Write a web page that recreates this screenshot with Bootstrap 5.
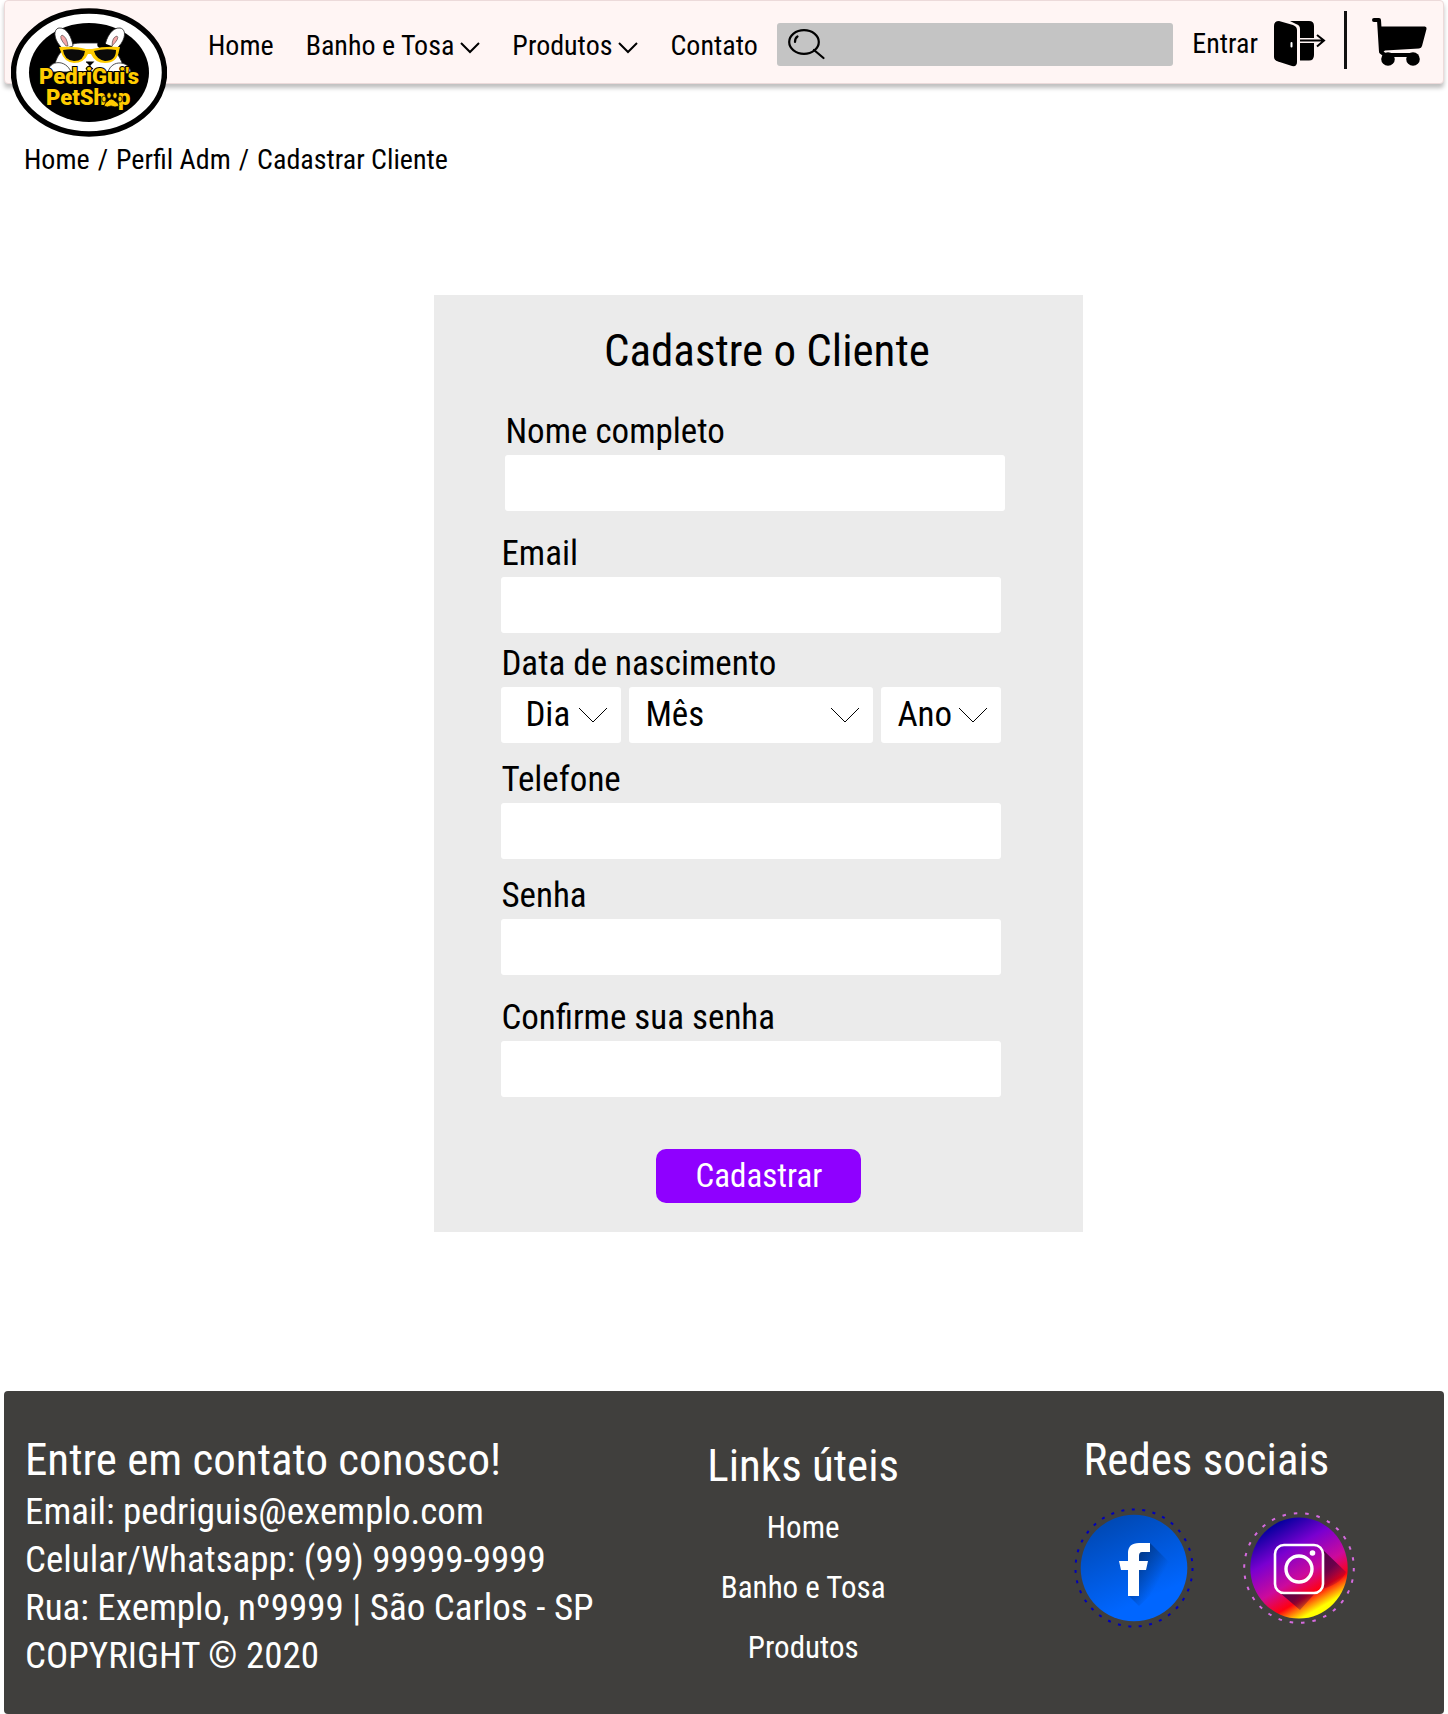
<!DOCTYPE html>
<html lang="pt-BR">
<head>
<meta charset="utf-8">
<meta name="viewport" content="width=device-width, initial-scale=1">
<title>PedriGui's PetShop - Cadastrar Cliente</title>
<link href="https://cdn.jsdelivr.net/npm/bootstrap@5.3.0/dist/css/bootstrap.min.css" rel="stylesheet">
<style>
  body { font-family: "Roboto Condensed", "Liberation Sans Narrow", "Open Sans Condensed", "DejaVu Sans Condensed", sans-serif; color: #000; background: #fff; }
  a { color: inherit; text-decoration: none; }
  svg { display: block; flex-shrink: 0; }
  .site-bar { min-height: 84px; background: #fff5f4; border: 1px solid #ecdada; border-radius: 4px; box-shadow: 0 4px 4px rgba(0,0,0,.25); font-size: 28px; line-height: 36px; }
  .logo-link { margin: 7px 41px -54px 6px; align-self: flex-start; }
  .menu { gap: 32px; padding-top: 8px; }
  .menu a { display: flex; align-items: center; gap: 6px; white-space: nowrap; }
  .menu svg { margin-top: 4px; }
  .search-box { background: #c4c4c4; height: 43px; border-radius: 3px; margin: 4px 0 0 19px; padding-left: 11px; }
  .search-box input { background: transparent; border: 0; outline: 0; min-width: 0; font-size: 24px; }
  .account { gap: 16px; margin-left: 19px; padding-top: 4px; }
  .rule { width: 3px; height: 58px; background: #111; margin: 0 25px 4px 18px; }
  .cart { margin-right: 16px; }
  .trail { padding: 56px 24px 0; font-size: 28px; line-height: 40px; }
  .trail .breadcrumb { --bs-breadcrumb-divider-color: #000; --bs-breadcrumb-item-active-color: #000; }
  .signup { width: 649px; max-width: 100%; margin: 115px 0 159px 30%; background: #ebebeb; padding: 27px 0 29px; }
  .signup h1 { font-size: 45px; line-height: 58px; margin-bottom: 29px; font-weight: 400; }
  .fields { padding-left: 67px; }
  .entry { width: 500px; max-width: 100%; margin-bottom: 20px; }
  .entry.near { margin-bottom: 14px; }
  .entry.tight { margin-bottom: 8px; }
  .entry label, .entry legend { display: block; float: none; font-size: 35px; line-height: 46px; margin: 0; }
  .entry .form-control, .entry .form-select { height: 56px; border: 0; border-radius: 3px; background-color: #fff; font-size: 35px; line-height: 46px; padding: 0 16px; color: #000; }
  .entry .form-select { background-image: url("data:image/svg+xml,%3Csvg xmlns='http://www.w3.org/2000/svg' viewBox='0 0 30 16'%3E%3Cpath d='M1 1 15 15 29 1' fill='none' stroke='%23000'/%3E%3C/svg%3E"); background-size: 30px 16px; background-position: right 13px center; }
  .entry .short { width: 120px; flex: none; }
  .send { width: 205px; height: 54px; margin-top: 52px; background: #8f00ff; color: #fff; border: 0; border-radius: 10px; font-size: 33px; line-height: 46px; padding: 0; }
  .send:hover { background: #7c00dd; color: #fff; }
  .site-foot { background: #403f3d; color: #fff; border-radius: 4px; padding: 41px 0 34px; display: grid; grid-template-columns: 44% 23% 33%; font-size: 37px; line-height: 48px; }
  .site-foot h2 { font-size: 45px; line-height: 56px; margin: 0; font-weight: 400; white-space: nowrap; }
  .contact { padding-left: 21px; white-space: nowrap; }
  .useful { font-size: 31px; line-height: 60px; padding-top: 6px; }
  .useful h2 { margin-bottom: 4px; }
  .social { gap: 49px; margin-top: 20px; }
  @media (max-width: 991px) {
    .site-bar { flex-wrap: wrap; }
    .signup { margin-left: auto; margin-right: auto; }
    .fields { padding: 0 20px; }
    .site-foot { grid-template-columns: 1fr; }
    .contact { white-space: normal; }
  }
</style>
<script src="https://cdn.jsdelivr.net/npm/bootstrap@5.3.0/dist/js/bootstrap.bundle.min.js"></script>
</head>
<body>
<header class="site-bar d-flex align-items-center mx-1">
  <a class="logo-link" href="#" aria-label="PedriGui's PetShop">
    <svg width="156" height="129" viewBox="11 8 156 129">
      <ellipse cx="89" cy="72.500" rx="75.500" ry="61.500" fill="#fff" stroke="#000" stroke-width="5.500"/>
      <ellipse cx="89" cy="72.500" rx="60" ry="49.500"/>
      <g fill="#fff" stroke="#222" stroke-width=".8">
        <path d="M54 72C54 55 66 43 80 43H99C112 45 123 57 124 72Z"/>
        <path d="M63 49C53 40 53 29 59 28C67 27 72 38 73 46Z"/>
        <path d="M116 49C126 41 127 29 120 28C112 27 106 38 105 46Z"/>
        <path d="M48 72C49 60 66 59 71 72ZM108 72C112 59 129 61 131 72Z"/>
      </g>
      <path d="M98 42Q95 47 102 49L117 52Q113 44 98 42Z"/>
      <path d="M66 46Q58 37 62 35Q67 37 68 46ZM112 46Q112 37 117 36Q120 38 112 46Z" fill="#f4a6a6" stroke="#222" stroke-width=".5"/>
      <path d="M59 47Q75 46 86 49H92Q104 46 120 47L119 51Q117 63 105 63Q95 63 91 54H88Q84 63 74 63Q64 62 61 52Z" fill="#fc0"/>
      <path d="M63 50Q74 48 85 51Q84 61 74 61Q64 60 63 50ZM94 51Q105 48 116 50Q116 61 105 61Q96 59 94 51Z" fill="#0a0a0a"/>
      <path d="M86 62H93L90 65V67L93 69M89 66L86 69" stroke="#000" stroke-width="1.200"/>
      <g fill="#fc0" stroke="#000" stroke-width="2" paint-order="stroke" font-family="Roboto, 'Liberation Sans', sans-serif" font-weight="900" font-size="22">
        <text x="39" y="84">PedriGui's</text>
        <text x="46" y="105">PetSh</text>
        <text x="118" y="105">p</text>
      </g>
      <g fill="#fc0" stroke="#000" stroke-width=".8">
        <path d="M104 106Q105 102 108 101Q111 97 115 101Q119 103 119 106Q115 108 111 106Q107 108 104 106Z"/>
        <ellipse cx="104" cy="99" rx="2.200" ry="3"/><ellipse cx="109" cy="95.500" rx="2.200" ry="3"/>
        <ellipse cx="115" cy="95.500" rx="2.200" ry="3"/><ellipse cx="120" cy="99" rx="2.200" ry="3"/>
      </g>
    </svg>
  </a>
  <nav class="menu d-flex align-items-center flex-shrink-0">
    <a href="#">Home</a>
    <a href="#">Banho e Tosa
      <svg width="20" height="12" viewBox="0 0 20 12" fill="none" stroke="#000" stroke-width="2"><path d="M1 1 10 10 19 1"/></svg></a>
    <a href="#">Produtos
      <svg width="20" height="12" viewBox="0 0 20 12" fill="none" stroke="#000" stroke-width="2"><path d="M1 1 10 10 19 1"/></svg></a>
    <a href="#">Contato</a>
  </nav>
  <form class="search-box d-flex align-items-center flex-grow-1" role="search">
    <label for="busca" class="d-block" aria-label="Buscar">
      <svg width="38" height="31" viewBox="0 0 38 31" fill="none" stroke="#000" stroke-width="2.200" stroke-linecap="round"><ellipse cx="16" cy="13" rx="14.800" ry="11.800"/><path d="M26 21 35.500 29"/><path d="M7 13Q7 9 9.500 7.500"/></svg>
    </label>
    <input id="busca" type="search" class="flex-grow-1" aria-label="Buscar">
  </form>
  <a class="account d-flex align-items-center" href="#">Entrar
    <svg width="52" height="46" viewBox="0 0 52 46">
      <path d="M16 0H35Q40 0 40 5V17H26V8Q26 4 22 3ZM26 22H40V34Q40 39.500 35 39.500H26Z"/>
      <path d="M26 19.500H50M43 14 50 19.500 43 25.500" fill="none" stroke="#fff5f4" stroke-width="5"/>
      <path d="M26 19.500H50M43 14 50 19.500 43 25.500" fill="none" stroke="#000" stroke-width="2"/>
      <path d="M5 0 19 4Q23 5.500 23 9V41Q23 46 18 45L4 40.500Q0 39 0 36V5Q0 0 5 0Z"/>
      <rect x="16.500" y="21" width="2" height="5.500" rx="1" fill="#fff"/>
    </svg></a>
  <span class="rule"></span>
  <a class="cart" href="#" aria-label="Carrinho">
    <svg width="55" height="48" viewBox="0 0 55 48">
      <path d="M2 2H7L9 34L13 37H40" fill="none" stroke="#000" stroke-width="4" stroke-linecap="round" stroke-linejoin="round"/>
      <path d="M8 8.500H53Q55 9 54.500 11L50 28Q49.500 30 47 30.500L13 32.500L10 35Z"/>
      <circle cx="16" cy="41" r="6.800"/><circle cx="41" cy="41" r="6.800"/>
    </svg></a>
</header>

<nav class="trail" aria-label="breadcrumb">
  <ol class="breadcrumb mb-0">
    <li class="breadcrumb-item"><a href="#">Home</a></li>
    <li class="breadcrumb-item"><a href="#">Perfil Adm</a></li>
    <li class="breadcrumb-item active" aria-current="page">Cadastrar Cliente</li>
  </ol>
</nav>

<main>
  <form class="signup">
    <h1 class="text-center ps-3">Cadastre o Cliente</h1>
    <div class="fields">
      <div class="entry ms-1"><label for="nome">Nome completo</label><input class="form-control" id="nome" type="text"></div>
      <div class="entry tight"><label for="email">Email</label><input class="form-control" id="email" type="email"></div>
      <fieldset class="entry near">
        <legend>Data de nascimento</legend>
        <div class="d-flex gap-2">
          <select class="form-select short ps-4" aria-label="Dia"><option>Dia</option></select>
          <select class="form-select" aria-label="Mês"><option>Mês</option></select>
          <select class="form-select short" aria-label="Ano"><option>Ano</option></select>
        </div>
      </fieldset>
      <div class="entry near"><label for="tel">Telefone</label><input class="form-control" id="tel" type="tel"></div>
      <div class="entry"><label for="senha">Senha</label><input class="form-control" id="senha" type="password"></div>
      <div class="entry"><label for="senha2">Confirme sua senha</label><input class="form-control" id="senha2" type="password"></div>
    </div>
    <button class="btn send d-block mx-auto" type="submit">Cadastrar</button>
  </form>
</main>

<footer class="site-foot mx-1">
  <section class="contact">
    <h2>Entre em contato conosco!</h2>
    <div>Email: pedriguis@exemplo.com</div>
    <div>Celular/Whatsapp: (99) 99999-9999</div>
    <div>Rua: Exemplo, nº9999 | São Carlos - SP</div>
    <div>COPYRIGHT © 2020</div>
  </section>
  <section class="useful d-flex flex-column align-items-center">
    <h2>Links úteis</h2>
    <a href="#">Home</a>
    <a href="#">Banho e Tosa</a>
    <a href="#">Produtos</a>
  </section>
  <section>
    <h2 class="text-center">Redes sociais</h2>
    <div class="social d-flex justify-content-center align-items-center ps-3">
      <a href="#" aria-label="Facebook">
        <svg width="120" height="120" viewBox="0 0 120 120">
          <defs>
            <linearGradient id="fb" x1=".25" y1="0" x2=".6" y2=".8"><stop offset="0" stop-color="#0047b0"/><stop offset="1" stop-color="#06f"/></linearGradient>
            <linearGradient id="fs" x1="0" y1="0" x2=".7" y2=".5"><stop offset="0" stop-color="#002a66"/><stop offset="1" stop-color="#002a66" stop-opacity="0"/></linearGradient>
          </defs>
          <circle cx="60" cy="60" r="58.500" fill="none" stroke="#0000b8" stroke-width="2" stroke-dasharray="3 7.500"/>
          <circle cx="60" cy="60" r="53.300" fill="url(#fb)"/>
          <path d="M76 35 103 62 65 98 54 87V44Z" fill="url(#fs)"/>
          <path d="M76 35V44H68Q65 44 65 48V53H74L72 62H65V88H54V62H47L45 53H54V45Q54 35 65 35Z" fill="#fff"/>
        </svg></a>
      <a href="#" aria-label="Instagram">
        <svg width="112" height="112" viewBox="0 0 112 112">
          <defs>
            <linearGradient id="ig" gradientUnits="userSpaceOnUse" x1="30" y1="12" x2="78" y2="95"><stop offset="0" stop-color="#00009c"/><stop offset=".32" stop-color="#7a00d0"/><stop offset=".62" stop-color="#cc0a9c"/><stop offset=".83" stop-color="#ff0010"/><stop offset="1" stop-color="#ffff00"/></linearGradient>
            <linearGradient id="is" gradientUnits="userSpaceOnUse" x1="56" y1="57" x2="82" y2="87"><stop offset="0" stop-color="#500040"/><stop offset=".5" stop-color="#500040" stop-opacity=".8"/><stop offset="1" stop-color="#500040" stop-opacity="0"/></linearGradient>
          </defs>
          <circle cx="56" cy="56" r="54.800" fill="none" stroke="#d66be0" stroke-width="2" stroke-dasharray="3.500 7.980"/>
          <ellipse cx="56" cy="56" rx="48.700" ry="50.500" fill="url(#ig)"/>
          <path d="M79 37 103 60Q98 73 75 78L57 98 36 80Z" fill="url(#is)"/>
          <rect x="32" y="33" width="48" height="48" rx="9" fill="url(#ig)" stroke="#fff" stroke-width="2.600"/>
          <circle cx="56" cy="57" r="13" fill="none" stroke="#fff" stroke-width="3.400"/><circle cx="69.500" cy="41" r="2.800" fill="#fff"/>
        </svg></a>
    </div>
  </section>
</footer>
</body>
</html>
